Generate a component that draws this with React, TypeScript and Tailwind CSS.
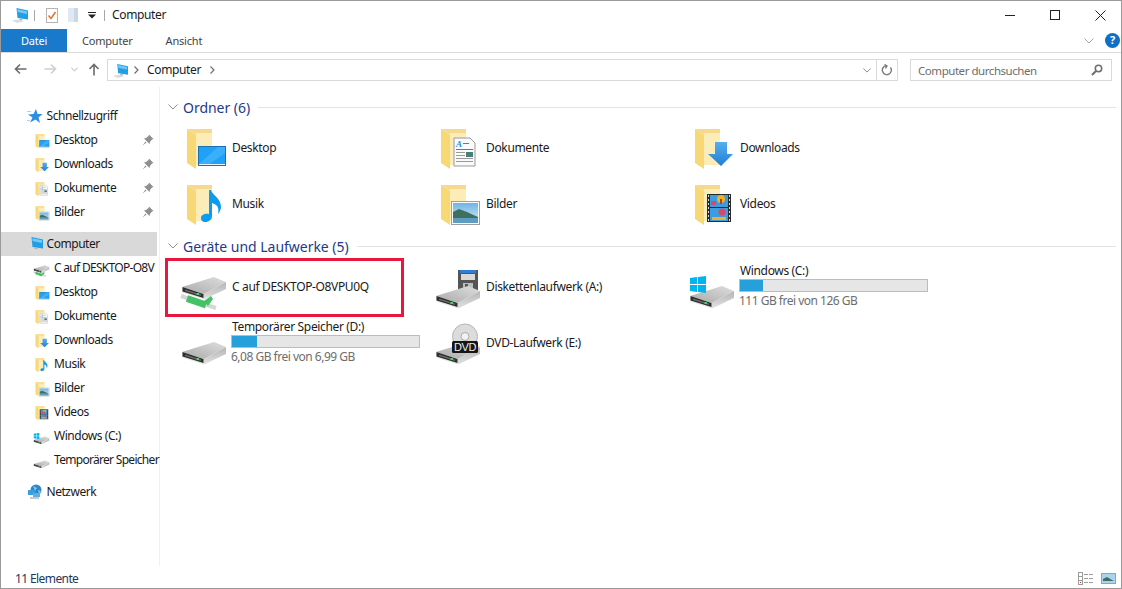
import type { ReactNode } from 'react';

const FONT = 'font-["Noto_Sans",sans-serif]';

function Svg({ size, vb = '0 0 48 48', children }: { size: number; vb?: string; children: ReactNode }) {
  return (
    <svg width={size} height={size} viewBox={vb} className="shrink-0">
      {children}
    </svg>
  );
}

function FolderShape() {
  return (
    <>
      <polygon points="7,6 32,6 32,42 16,42 16,10" fill="#fde9a8" />
      <polygon points="16,10 32,10 32,42 16,42" fill="#fcecb8" />
      <polygon points="7,6 16,12 16,46 7,40" fill="#f8d775" />
      <polygon points="7,6 32,6 32,10 16,10 16,12" fill="#f6d98c" />
    </>
  );
}

const folderOverlays: Record<string, ReactNode> = {
  desktop: (
    <>
      <rect x="18" y="23" width="28" height="20" fill="#1a6fb5" />
      <rect x="19" y="24" width="26" height="17" fill="#1ea1f7" />
      <polygon points="19,41 38,24 45,24 45,30 30,41" fill="#3bb0fa" />
      <rect x="19" y="41" width="26" height="1" fill="#e8f6ff" />
    </>
  ),
  docs: (
    <>
      <polygon points="20,15 36,15 41,20 41,43 20,43" fill="#fafafa" stroke="#9a9a9a" />
      <text x="22" y="24" fontSize="9" fontStyle="italic" fontWeight="700" fill="#1a8fe0" fontFamily="'Liberation Serif', serif">A</text>
      <rect x="29" y="20" width="6" height="1" fill="#1a8fe0" />
      <rect x="22" y="26" width="17" height="1" fill="#1a8fe0" />
      <rect x="22" y="29" width="9" height="1" fill="#9a9a9a" />
      <rect x="22" y="32" width="9" height="1" fill="#9a9a9a" />
      <rect x="22" y="35" width="17" height="1" fill="#9a9a9a" />
      <rect x="22" y="38" width="17" height="1" fill="#9a9a9a" />
      <rect x="32" y="29" width="7" height="5" fill="#4d7d7a" />
    </>
  ),
  downloads: (
    <>
      <defs>
        <linearGradient id="dl" x1="0" y1="0" x2="0" y2="1">
          <stop offset="0" stopColor="#55aef0" />
          <stop offset="1" stopColor="#1f7fd6" />
        </linearGradient>
      </defs>
      <polygon points="27,19 39,19 39,31 45,31 33,43 20,31 27,31" fill="url(#dl)" />
    </>
  ),
  music: (
    <path
      d="M29 11 h2 c1 5 10 8 10 17 c0 3 -2 6 -3 7 c1 -4 1 -9 -6 -11 v13 c0 4 -4 6 -7 6 c-3 0 -4 -2 -4 -4 c0 -3 4 -5 8 -4 z"
      fill="#0b9cf0"
    />
  ),
  pictures: (
    <>
      <defs>
        <linearGradient id="sky" x1="0" y1="0" x2="0" y2="1">
          <stop offset="0" stopColor="#6fb4e6" />
          <stop offset="1" stopColor="#d7ecf8" />
        </linearGradient>
      </defs>
      <rect x="17.5" y="22.5" width="28" height="23" fill="#fafafa" stroke="#9f9f9f" />
      <rect x="19" y="24" width="25" height="20" fill="url(#sky)" />
      <polygon points="19,33 25,30 33,33 44,38 44,39 19,39" fill="#3f6f5e" />
      <rect x="19" y="39" width="25" height="5" fill="#5f9cc4" />
    </>
  ),
  videos: (
    <>
      <rect x="19" y="15" width="24" height="28" fill="#2a2a2a" />
      <rect x="22" y="16" width="18" height="12" fill="#3d9be0" />
      <rect x="22" y="29" width="18" height="13" fill="#3d9be0" />
      <circle cx="33" cy="20" r="4" fill="#e9b32a" />
      <rect x="32" y="20" width="2" height="5" fill="#c8352a" />
      <rect x="23" y="22" width="5" height="4" fill="#d9486a" />
      <circle cx="34" cy="33" r="3.5" fill="#d9486a" />
      <rect x="24" y="38" width="14" height="3" fill="#e9b32a" />
      <path d="M20.5 16 V42 M41.5 16 V42" stroke="#ddd" strokeDasharray="2 2" />
    </>
  ),
};

function Folder({ kind, size = 48 }: { kind: string; size?: number }) {
  return (
    <Svg size={size}>
      <FolderShape />
      {folderOverlays[kind]}
    </Svg>
  );
}

// drive body, drawn with its left corner at y=34
function DriveShape({ dy = 0 }: { dy?: number }) {
  return (
    <g transform={`translate(0 ${dy})`}>
      <defs>
        <linearGradient id="driveTop" x1="0" y1="1" x2="1" y2="0">
          <stop offset="0" stopColor="#a9a9a9" />
          <stop offset="1" stopColor="#dedede" />
        </linearGradient>
        <linearGradient id="driveRight" x1="0" y1="0" x2="0" y2="1">
          <stop offset="0" stopColor="#b4b4b4" />
          <stop offset="1" stopColor="#e2e2e2" />
        </linearGradient>
      </defs>
      <polygon points="2,34 34,24 46,29 24,41" fill="url(#driveTop)" />
      <polygon points="24,41 46,29 46,36 24,46.5" fill="url(#driveRight)" />
      <polygon points="2,34 24,41 24,46.5 2,39.5" fill="#e6e6e6" />
      <polygon points="2.5,34 23.5,41 23.5,45 2.5,38.5" fill="#2e2e2e" />
      <polygon points="5,36.5 21,41.5 21,43 5,38" fill="#6a6a6a" />
      <rect x="16.5" y="40" width="2.5" height="2" fill="#46d36f" />
    </g>
  );
}

const driveOverlays: Record<string, ReactNode> = {
  plain: <DriveShape />,
  net: (
    <>
      <DriveShape dy={-9} />
      <path d="M1 34 L36 46" stroke="#d6d6d6" strokeWidth="4" />
      <path d="M7 36.5 L26 43" stroke="#43c266" strokeWidth="7" />
      <polygon points="24,39 31,34 33,37 28,44" fill="#43c266" />
    </>
  ),
  floppy: (
    <>
      <rect x="24" y="8" width="20" height="21" fill="#555" />
      <rect x="26" y="8" width="16" height="3" fill="#2e7fd2" />
      <rect x="27" y="12" width="14" height="6" fill="#d8d8d8" />
      <rect x="29" y="21" width="10" height="8" fill="#bdbdbd" />
      <rect x="31" y="22" width="3" height="6" fill="#555" />
      <DriveShape />
    </>
  ),
  windows: (
    <>
      <DriveShape />
      <g fill="#00b4f0">
        <polygon points="2,16 9,15 9,22 2,22" />
        <polygon points="10,15 18,14 18,22 10,22" />
        <polygon points="2,23 9,23 9,30 2,29" />
        <polygon points="10,23 18,23 18,31 10,30" />
      </g>
    </>
  ),
  dvd: (
    <>
      <DriveShape />
      <circle cx="31" cy="18.5" r="12.5" fill="#dcdcdc" stroke="#b5b5b5" />
      <circle cx="31" cy="18.5" r="4" fill="#f2f2f2" stroke="#aaa" />
      <rect x="18" y="23" width="26" height="12" rx="1.5" fill="#161616" />
      <text x="31" y="33" textAnchor="middle" fontSize="11" fill="#f0f0f0" fontFamily="'Liberation Sans', sans-serif">
        DVD
      </text>
    </>
  ),
};

function Drive({ kind, size = 48 }: { kind: string; size?: number }) {
  return <Svg size={size}>{driveOverlays[kind]}</Svg>;
}

function ComputerIcon({ size = 16 }: { size?: number }) {
  return (
    <Svg size={size} vb="0 0 16 16">
      <polygon points="0,13.5 6,12.5 12,14.5 5,16" fill="#dcdcdc" />
      <polygon points="4.5,1 16,3.5 16,12.5 5.5,11" fill="#1e9fe6" />
      <polygon points="5.5,2.2 15,4.3 15,7 5.5,5" fill="#74c9f4" />
      <polygon points="8,11.5 11,12 10,13.5 7,13" fill="#b8b8b8" />
    </Svg>
  );
}

function Star() {
  return (
    <Svg size={16} vb="0 0 16 16">
      <polygon points="9,1 10.5,6 15.5,6 11.5,9.5 13,15 8.5,11.5 3,14.5 5.5,9.5 1,6.5 6.5,6" fill="#2a8fe4" />
      <rect x="0" y="3" width="4" height="1" fill="#a9d3f3" />
      <rect x="0" y="12" width="3" height="1" fill="#a9d3f3" />
    </Svg>
  );
}

function Globe() {
  return (
    <Svg size={16} vb="0 0 16 16">
      <circle cx="9" cy="6" r="5.5" fill="#2f86c9" />
      <path d="M6 2 l4 2 l-2 3 z M11 6 l3 1 l-2 3 z" fill="#7fc6ee" />
      <rect x="1" y="6" width="7" height="5" fill="#3d9ddc" />
      <rect x="6" y="9" width="7" height="4" fill="#5aaee0" />
      <rect x="3" y="13" width="9" height="2" fill="#c8c8c8" />
    </Svg>
  );
}

function Pin() {
  return (
    <svg width="12" height="12" viewBox="0 0 12 12" className="shrink-0">
      <path d="M7 0.5 L11.5 5 L10 5.5 L8 8 L7.5 10 L2 4.5 L4 4 L6.5 2 Z" fill="#8f8f8f" />
      <path d="M3.5 7.5 L0.5 11.5 L4.5 8.5 Z" fill="#8f8f8f" />
    </svg>
  );
}

function Chevron({ className, color = '#8a8a8a', w = 10, h = 6 }: { className?: string; color?: string; w?: number; h?: number }) {
  return (
    <svg width={w} height={h} viewBox="0 0 10 6" className={`shrink-0 ${className ?? ''}`}>
      <path d="M0.5 0.5 L5 5 L9.5 0.5" fill="none" stroke={color} strokeWidth="1" />
    </svg>
  );
}

function SmallArrow() {
  return (
    <svg width="5" height="8" viewBox="0 0 5 8" className="shrink-0">
      <path d="M0.5 0.5 L4 4 L0.5 7.5" fill="none" stroke="#6e6e6e" strokeWidth="1.2" />
    </svg>
  );
}

function SideRow({ icon, label, pin, sub = true, active, tight }: { icon: ReactNode; label: string; pin?: boolean; sub?: boolean; active?: boolean; tight?: boolean }) {
  return (
    <div className={`flex h-[24px] items-center whitespace-nowrap ${sub ? 'pl-[32px]' : 'pl-[26px]'} ${active ? 'w-[156px] bg-[#d9d9d9]' : 'w-[158px]'}`}>
      <div className="flex w-[21px] shrink-0 items-center">{icon}</div>
      <span className={`${sub ? '' : 'ml-[-1.5px]'} ${tight ? 'tracking-[-0.7px]' : 'tracking-[-0.45px]'}`}>{label}</span>
      {pin && (
        <span className="ml-auto mr-[5px]">
          <Pin />
        </span>
      )}
    </div>
  );
}

function SectionHeader({ label, className }: { label: string; className?: string }) {
  return (
    <div className={`flex h-[20px] items-center pl-[8px] pr-[5px] ${className ?? ''}`}>
      <Chevron className="mr-[5px]" color="#8e8e8e" w={10} h={6} />
      <span className="whitespace-nowrap text-[14px] tracking-[-0.03px] text-[#1e3a8a]">{label}</span>
      <div className="ml-[8px] h-px flex-1 bg-[#e3e3e3]" />
    </div>
  );
}

function Tile({ icon, label }: { icon: ReactNode; label: string }) {
  return (
    <div className="flex h-[56px] items-center pl-[10px]">
      {icon}
      <span className="ml-[4px] whitespace-nowrap pt-[1px]">{label}</span>
    </div>
  );
}

function DriveTile({ icon, label, free, fill }: { icon: ReactNode; label: string; free: string; fill: number }) {
  return (
    <div className="flex h-[56px] items-center pl-[10px]">
      {icon}
      <div className="ml-[3px] flex w-[189px] flex-col">
        <span className="ml-[1px] h-[16px] whitespace-nowrap leading-[16px]">{label}</span>
        <div className="h-[13px] border border-[#bcbcbc] bg-[#e6e6e6]">
          <div className="h-full bg-[#26a0da]" style={{ width: fill }} />
        </div>
        <span className="mt-[1px] h-[16px] whitespace-nowrap leading-[16px] tracking-[-0.5px] text-[#6d6d6d]">{free}</span>
      </div>
    </div>
  );
}

export default function App() {
  return (
    <div className={`box-border flex h-[589px] w-[1122px] flex-col overflow-hidden border border-[#9a9a9a] bg-white text-[12px] tracking-[-0.35px] text-[#1a1a1a] ${FONT}`}>
      {/* Title bar */}
      <div className="flex h-[28px] shrink-0 items-center pl-[11px]">
        <ComputerIcon size={16} />
        <div className="ml-[6px] h-[11px] w-px bg-[#a8a8a8]" />
        <svg width="12" height="15" viewBox="0 0 12 15" className="ml-[11px] shrink-0">
          <rect x="0.5" y="0.5" width="11" height="14" fill="#fff" stroke="#b5b5b5" />
          <path d="M2.5 7.5 L5 10.5 L9.5 4" fill="none" stroke="#e8702a" strokeWidth="1.5" />
        </svg>
        <svg width="10" height="15" viewBox="0 0 10 15" className="ml-[10px] shrink-0">
          <rect x="0" y="0" width="10" height="14" fill="#dfe8f3" />
          <rect x="6" y="0" width="4" height="14" fill="#c9d6e6" />
        </svg>
        <svg width="8" height="7" viewBox="0 0 8 7" className="ml-[10px] shrink-0">
          <rect x="0" y="0" width="8" height="1" fill="#222" />
          <polygon points="0,2.5 8,2.5 4,6.5" fill="#222" />
        </svg>
        <div className="ml-[8px] h-[11px] w-px bg-[#a8a8a8]" />
        <span className="mb-[1px] ml-[7px]">Computer</span>
        <div className="ml-auto flex items-center">
          <div className="h-px w-[10px] bg-[#222]" />
          <div className="ml-[35px] h-[10px] w-[10px] border border-[#222]" />
          <svg width="11" height="11" viewBox="0 0 11 11" className="ml-[35px] mr-[15px]">
            <path d="M0.5 0.5 L10.5 10.5 M10.5 0.5 L0.5 10.5" stroke="#222" strokeWidth="1" />
          </svg>
        </div>
      </div>

      {/* Tabs */}
      <div className="flex h-[24px] shrink-0 items-stretch border-b border-[#dadbdc] text-[11px] tracking-[-0.2px]">
        <div className="flex w-[66px] items-center justify-center bg-[#1979ca] pt-[1px] text-white">Datei</div>
        <div className="flex items-center pl-[15px] pt-[1px] text-[#444444]">Computer</div>
        <div className="ml-[33px] flex items-center pt-[1px] text-[#444444]">Ansicht</div>
        <div className="ml-auto flex items-center pr-[1px]">
          <Chevron color="#a9a9a9" w={10} h={6} />
          <div className="ml-[11px] flex h-[15px] w-[15px] items-center justify-center rounded-full bg-[#0f6fc6] text-[11px] font-bold text-white">?</div>
        </div>
      </div>

      {/* Address row */}
      <div className="flex h-[34px] shrink-0 pl-[13px] pt-[6px]">
        <svg width="13" height="12" viewBox="0 0 13 12" className="mt-[4px] shrink-0">
          <path d="M12.5 6 H1.5 M6 1.5 L1.5 6 L6 10.5" fill="none" stroke="#6b6b6b" strokeWidth="1.6" />
        </svg>
        <svg width="13" height="12" viewBox="0 0 13 12" className="ml-[17px] mt-[4px] shrink-0">
          <path d="M0.5 6 H11.5 M7 1.5 L11.5 6 L7 10.5" fill="none" stroke="#cfcfcf" strokeWidth="1.6" />
        </svg>
        <Chevron className="ml-[14px] mt-[8px]" color="#8a8a8a" w={7} h={5} />
        <svg width="12" height="13" viewBox="0 0 12 13" className="ml-[10px] mt-[4px] shrink-0">
          <path d="M6 12.5 V1.5 M1.5 6 L6 1.5 L10.5 6" fill="none" stroke="#6b6b6b" strokeWidth="1.6" />
        </svg>
        <div className="ml-[7px] flex h-[22px] w-[791px] items-center border border-[#d9d9d9] pl-[5px]">
          <ComputerIcon size={15} />
          <span className="ml-[6px]"><SmallArrow /></span>
          <span className="mb-[1px] ml-[8px]">Computer</span>
          <span className="ml-[9px]"><SmallArrow /></span>
          <div className="ml-auto flex h-full items-center">
            <Chevron color="#6e6e6e" w={8} h={5} className="mr-[5px]" />
            <div className="flex h-full w-[21px] items-center justify-center border-l border-[#d9d9d9]">
              <svg width="12" height="12" viewBox="0 0 12 12">
                <path d="M9.5 3.5 A4.5 4.5 0 1 1 5 1.7 M3.5 0.5 L6 2 L4.5 4.5" fill="none" stroke="#7a7a7a" strokeWidth="1.4" />
              </svg>
            </div>
          </div>
        </div>
        <div className="ml-[12px] flex h-[22px] w-[202px] items-center justify-between border border-[#d9d9d9] pl-[7px] pr-[8px] text-[11.5px] tracking-[-0.45px] text-[#6d6d6d]">
          <span className="pt-[1px]">Computer durchsuchen</span>
          <svg width="12" height="12" viewBox="0 0 12 12">
            <circle cx="7.5" cy="4.5" r="3.2" fill="none" stroke="#6e6e6e" strokeWidth="1.5" />
            <path d="M5 7 L1 11" stroke="#6e6e6e" strokeWidth="2" />
          </svg>
        </div>
      </div>

      {/* Main */}
      <div className="flex min-h-0 flex-1">
        <aside className="mb-[3px] w-[159px] shrink-0 border-r border-[#f0f0f0] pt-[17px]">
          <SideRow sub={false} icon={<Star />} label="Schnellzugriff" />
          <SideRow icon={<Folder kind="desktop" size={17} />} label="Desktop" pin />
          <SideRow icon={<Folder kind="downloads" size={17} />} label="Downloads" pin />
          <SideRow icon={<Folder kind="docs" size={17} />} label="Dokumente" pin />
          <SideRow icon={<Folder kind="pictures" size={17} />} label="Bilder" pin />
          <div className="h-[8px]" />
          <SideRow sub={false} active icon={<ComputerIcon size={16} />} label="Computer" />
          <SideRow tight icon={<Drive kind="net" size={17} />} label="C auf DESKTOP-O8V" />
          <SideRow icon={<Folder kind="desktop" size={17} />} label="Desktop" />
          <SideRow icon={<Folder kind="docs" size={17} />} label="Dokumente" />
          <SideRow icon={<Folder kind="downloads" size={17} />} label="Downloads" />
          <SideRow icon={<Folder kind="music" size={17} />} label="Musik" />
          <SideRow icon={<Folder kind="pictures" size={17} />} label="Bilder" />
          <SideRow icon={<Folder kind="videos" size={17} />} label="Videos" />
          <SideRow icon={<Drive kind="windows" size={17} />} label="Windows (C:)" />
          <SideRow tight icon={<Drive kind="plain" size={17} />} label="Temporärer Speicher" />
          <div className="h-[8px]" />
          <SideRow sub={false} icon={<Globe />} label="Netzwerk" />
        </aside>

        <main className="min-w-0 flex-1 pt-[10px]">
          <SectionHeader label="Ordner (6)" />
          <div className="ml-[10px] mt-[2px] grid grid-cols-[254px_254px_254px]">
            <Tile icon={<Folder kind="desktop" />} label="Desktop" />
            <Tile icon={<Folder kind="docs" />} label="Dokumente" />
            <Tile icon={<Folder kind="downloads" />} label="Downloads" />
            <Tile icon={<Folder kind="music" />} label="Musik" />
            <Tile icon={<Folder kind="pictures" />} label="Bilder" />
            <Tile icon={<Folder kind="videos" />} label="Videos" />
          </div>
          <SectionHeader label="Geräte und Laufwerke (5)" className="mt-[5px]" />
          <div className="ml-[10px] mt-[2px] grid grid-cols-[254px_254px_254px]">
            <div className="relative">
              <Tile icon={<Drive kind="net" />} label="C auf DESKTOP-O8VPU0Q" />
              <div className="absolute left-[-5px] top-0 h-[59px] w-[239px] border-[3px] border-[#e8173c]" />
            </div>
            <Tile icon={<Drive kind="floppy" />} label="Diskettenlaufwerk (A:)" />
            <DriveTile icon={<Drive kind="windows" />} label="Windows (C:)" free="111 GB frei von 126 GB" fill={23} />
            <DriveTile icon={<Drive kind="plain" />} label="Temporärer Speicher (D:)" free="6,08 GB frei von 6,99 GB" fill={25} />
            <Tile icon={<Drive kind="dvd" />} label="DVD-Laufwerk (E:)" />
          </div>
        </main>
      </div>

      {/* Status bar */}
      <div className="flex h-[19px] shrink-0 items-center pl-[14px] pr-[5px] tracking-[-0.6px] text-[#1e395b]">
        <span>11 Elemente</span>
        <div className="ml-auto flex items-center">
          <svg width="16" height="13" viewBox="0 0 16 13">
            <g fill="none" stroke="#9c9c9c">
              <rect x="0.5" y="0.5" width="4" height="4" />
              <rect x="0.5" y="4.5" width="4" height="4" />
              <rect x="0.5" y="8.5" width="4" height="4" />
            </g>
            <rect x="2" y="10" width="1" height="1" fill="#c0392b" />
            <path d="M6 2.5 H10 M11 2.5 H15 M6 6.5 H10 M11 6.5 H15 M6 10.5 H10 M11 10.5 H15" stroke="#9c9c9c" />
          </svg>
          <svg width="15" height="11" viewBox="0 0 15 11" className="ml-[7px]">
            <rect x="0.5" y="0.5" width="14" height="10" fill="#a8d4f0" stroke="#a0a0a0" />
            <polygon points="2,6 6,4 11,7 13,8 2,8" fill="#3f6f5e" />
          </svg>
        </div>
      </div>
    </div>
  );
}
